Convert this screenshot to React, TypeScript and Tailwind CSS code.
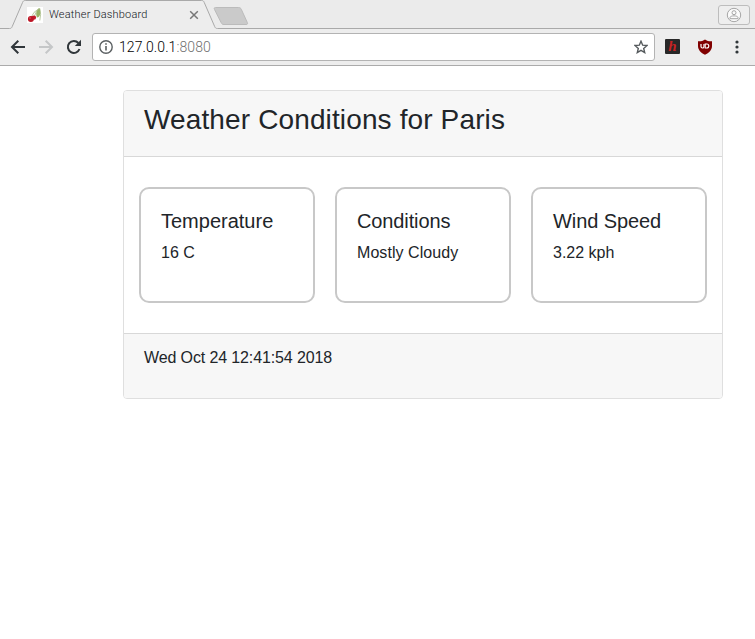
const readings = [
  { title: 'Temperature', value: '16 C', titleSpacing: 'tracking-normal', valueSpacing: 'tracking-normal' },
  { title: 'Conditions', value: 'Mostly Cloudy', titleSpacing: 'tracking-[-0.12px]', valueSpacing: 'tracking-[0.06px]' },
  { title: 'Wind Speed', value: '3.22 kph', titleSpacing: 'tracking-[-0.08px]', valueSpacing: 'tracking-normal' },
];

function TabStrip() {
  return (
    <div className="relative h-7 bg-[#ebebeb]">
      <svg className="absolute inset-0" width="755" height="29" viewBox="0 0 755 29" fill="none">
        <path d="M0 28.500H9.500C11 28.500 11.600 28 12.200 26.600L22.600 2.400C23.200 1 23.800 .5 25.300 .5H201.500C203 .5 203.600 1 204.200 2.400L214.700 26.600C215.300 28 215.900 28.500 217.400 28.500H755" stroke="#a9a9a9" fill="#ededed" />
        <path d="M215.500 7.500H238.500C240 7.500 240.700 8 241.300 9.300L247.300 22.500C247.900 23.900 247.500 24.500 246 24.500H224C222.500 24.500 221.800 24 221.200 22.700L214.500 9.500C213.900 8.200 214.100 7.500 215.500 7.500Z" fill="#cacaca" stroke="#bbbbbb" />
      </svg>
      <div className="relative flex h-7 items-center pl-[27px]">
        <svg width="16" height="16" viewBox="0 0 16 16" className="mt-0.5">
          <path fill="#fff" d="M0 0h16v16H0z" />
          <path d="M12.500 1C9 4 8.500 7 10 10.500C13.500 10.500 14 5 12.500 1Z" fill="#98b466" />
          <path d="M12.800 1.500Q14.500 7 12.800 13.500M12 1.500Q6 5 4.300 10M12 1.500Q8.500 5 7.300 9.500" fill="none" stroke="#9cb377" strokeWidth=".7" />
          <circle cx="6.900" cy="10.600" r="2.200" fill="#c41c2b" />
          <circle cx="3.900" cy="12" r="3" fill="#bd1625" />
          <circle cx="3" cy="11" r=".8" fill="#dc6b75" />
        </svg>
        <span className="mt-0.5 ml-1.5 w-[140px] font-[Roboto,sans-serif] text-[11px] leading-4 font-light tracking-[0.18px] text-[#10151a]">Weather Dashboard</span>
        <svg width="10" height="10" viewBox="0 0 10 10" className="mt-0.5">
          <path d="M1.200 1.200l7.600 7.600M8.800 1.200L1.200 8.800" stroke="#777" strokeWidth="1.500" />
        </svg>
        <div className="mr-[5px] ml-auto mt-0.5 flex h-5 w-8 items-center justify-center rounded-[3px] border border-[#bdbdbd] bg-[#eeeeee]">
          <svg width="16" height="16" viewBox="0 0 16 16" fill="#fafafa" stroke="#a5a5a5">
            <circle cx="8" cy="8" r="6.700" />
            <circle cx="8" cy="5.700" r="2" />
            <path d="M4 11.700V10.500C4.500 8.300 11.500 8.300 12 10.500V11.700Z" />
          </svg>
        </div>
      </div>
    </div>
  );
}

function Toolbar() {
  return (
    <div className="flex h-[38px] items-center border-b border-[#ababab] bg-[#ededed] pl-2.5">
      <svg width="16" height="16" viewBox="0 0 16 16" fill="none" stroke="#30363a" strokeWidth="2">
        <path d="M15 8H2.500M8.300 1.700L2 8l6.300 6.300" />
      </svg>
      <svg className="ml-3" width="16" height="16" viewBox="0 0 16 16" fill="none" stroke="#c5c7c8" strokeWidth="2">
        <path d="M1 8h12.500M7.700 1.700L14 8l-6.300 6.300" />
      </svg>
      <svg className="ml-3" width="16" height="16" viewBox="0 0 16 16">
        <path d="M13.500 10A6 6 0 1 1 12.400 4" fill="none" stroke="#30363a" strokeWidth="2" />
        <path d="M15 .8V7H8.800Z" fill="#30363a" />
      </svg>
      <div className="ml-2.5 flex h-7 w-[563px] items-center rounded-[3px] border border-[#b3b3b3] bg-white pl-1.5">
        <svg width="14" height="14" viewBox="0 0 14 14" fill="none" stroke="#5b6062" strokeWidth="1.400">
          <circle cx="7" cy="7" r="6.200" />
          <path d="M7 6v4.500M7 3.300v1.500" strokeWidth="1.600" />
        </svg>
        <span className="ml-1.5 font-[Roboto,sans-serif] text-sm leading-5 font-light tracking-[0.09px] text-black">127.0.0.1<span className="text-[#707070]">:8080</span></span>
        <svg className="mr-1.5 ml-auto" width="14" height="14" viewBox="0 0 14 14">
          <path d="M7 1.200l1.700 4 4.300.3-3.300 2.900 1 4.200L7 10.400l-3.700 2.200 1-4.200L1 5.500l4.300-.3Z" fill="none" stroke="#555a5d" strokeWidth="1.400" />
        </svg>
      </div>
      <div className="ml-2.5 flex h-[15px] w-[15px] items-center justify-center rounded-[1px] bg-[#282828] font-['Liberation_Serif',serif] text-[15px] leading-none font-bold text-[#c52323] italic">h</div>
      <svg className="ml-[17px]" width="16" height="16" viewBox="0 0 16 16">
        <path d="M8 .5C10 2 12.500 2.500 15 2.300V7C15 11 12 14 8 15.700C4 14 1 11 1 7V2.300C3.500 2.500 6 2 8 .5Z" fill="#800000" />
        <path d="M4 5v2.500a1.500 1.500 0 0 0 3 0V5" fill="none" stroke="#fff" strokeWidth="1.200" />
        <path d="M8.200 5v4h1.600a2 2 0 0 0 0-4Z" fill="none" stroke="#fff" strokeWidth="1.100" />
      </svg>
      <svg className="ml-[22px]" width="4" height="14" viewBox="0 0 4 14" fill="#30363a">
        <circle cx="2" cy="2" r="1.600" />
        <circle cx="2" cy="7" r="1.600" />
        <circle cx="2" cy="12" r="1.600" />
      </svg>
    </div>
  );
}

export default function App() {
  return (
    <div className="h-[639px] w-[755px] overflow-hidden bg-white font-['Liberation_Sans',Arial,sans-serif] text-base leading-6 text-[#212529]">
      <TabStrip />
      <Toolbar />
      <main className="mt-6 ml-[123px] w-[600px] overflow-hidden rounded border border-[#dfdfdf]">
        <header className="h-[66px] border-b border-[#d8d8d8] bg-[#f7f7f7] px-5 pt-3">
          <h3 className="text-[28px] leading-[33.600px] font-medium tracking-[0.13px]">Weather Conditions for Paris</h3>
        </header>
        <div className="flex h-44 gap-5 px-[15px] py-[30px]">
          {readings.map((r) => (
            <section key={r.title} className="h-[116px] flex-1 rounded-[10px] border-2 border-[#c8c8c8] px-[20px] py-5">
              <h5 className={`mb-2 text-xl leading-6 font-medium ${r.titleSpacing}`}>{r.title}</h5>
              <p className={r.valueSpacing}>{r.value}</p>
            </section>
          ))}
        </div>
        <footer className="h-[65px] border-t border-[#d8d8d8] bg-[#f7f7f7] px-5 pt-3">
          <p className="tracking-[-0.12px]">Wed Oct 24 12:41:54 2018</p>
        </footer>
      </main>
    </div>
  );
}
